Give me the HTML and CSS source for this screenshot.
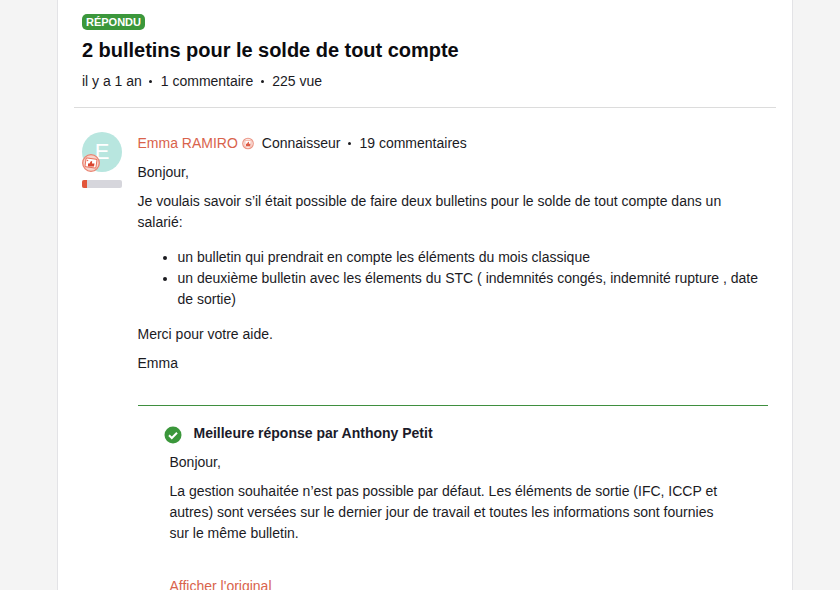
FILE: index.html
```html
<!DOCTYPE html>
<html lang="fr">
<head>
<meta charset="utf-8">
<title>2 bulletins pour le solde de tout compte</title>
<link rel="stylesheet" href="styles.css">
</head>
<body>
<main class="card">
  <header class="head">
    <span class="badge">RÉPONDU</span>
    <h1 class="title">2 bulletins pour le solde de tout compte</h1>
    <div class="meta"><span>il y a 1 an</span><i class="dot"></i><span>1 commentaire</span><i class="dot"></i><span>225 vue</span></div>
  </header>
  <article class="post">
    <aside class="side">
      <div class="avatar">E
        <svg class="rank" viewBox="0 0 18 18"><circle cx="9" cy="9" r="8.300" fill="#f7d3ca" stroke="#ea8471" stroke-width="1.300"/><rect x="3.500" y="4.500" width="11" height="9" rx="1" fill="#fff" stroke="#e8705b" stroke-width="1" transform="rotate(8 9 9)"/><circle cx="5.500" cy="6.500" r=".8" fill="#e8705b"/><path d="M6 12.500V9.500h1.500L9 7l1.200.4-.3 2.100h2.600l-.5 3z" fill="#d9452e"/></svg>
      </div>
      <div class="level"><span class="level-fill"></span></div>
    </aside>
    <div class="body">
      <div class="author"><a class="name">Emma RAMIRO</a>
        <svg class="mini" viewBox="0 0 12 12"><circle cx="6" cy="6" r="5.300" fill="#fbe6e1" stroke="#eb9585" stroke-width="1.100"/><rect x="3" y="3" width="6" height="6" rx=".6" fill="#fff" stroke="#ee9c8c" stroke-width=".6"/><path d="M4 8.500V6.300h1l1.200-2 .8.300-.2 1.700h1.700l-.3 2.200z" fill="#dd5a44"/></svg>
        <span class="role">Connaisseur</span><i class="dot"></i><span>19 commentaires</span></div>
      <p>Bonjour,</p>
      <p>Je voulais savoir s’il était possible de faire deux bulletins pour le solde de tout compte dans un salarié:</p>
      <ul>
        <li>un bulletin qui prendrait en compte les éléments du mois classique</li>
        <li>un deuxième bulletin avec les élements du STC ( indemnités congés, indemnité rupture , date de sortie)</li>
      </ul>
      <p>Merci pour votre aide.</p>
      <p>Emma</p>
      <section class="best">
        <div class="best-head">
          <svg class="check" viewBox="0 0 18 18"><circle cx="9" cy="9" r="8.500" fill="#3b973b"/><path d="M5 9.300l2.800 2.700L13 6.700" fill="none" stroke="#fff" stroke-width="2"/></svg>
          <strong>Meilleure réponse par Anthony Petit</strong>
        </div>
        <div class="best-body">
          <p>Bonjour,</p>
          <p>La gestion souhaitée n’est pas possible par défaut. Les éléments de sortie (IFC, ICCP et autres) sont versées sur le dernier jour de travail et toutes les informations sont fournies sur le même bulletin.</p>
          <a class="orig">Afficher l'original</a>
        </div>
      </section>
    </div>
  </article>
</main>
</body>
</html>
```
FILE: styles.css
```css
html, body { margin: 0; height: 590px; overflow: hidden; }
body { background: #f4f4f4; font-family: "Liberation Sans", Arial, sans-serif; font-size: 14px; line-height: 21px; color: #1b1b1f; }
.card { width: 736px; height: 590px; margin-left: 57px; box-sizing: border-box; background: #fff; border-left: 1px solid #e3e3e6; border-right: 1px solid #e3e3e6; padding: 14px 16px 0 16px; }
.head { height: 93px; border-bottom: 1px solid #dcdcdc; padding-left: 8px; }
.badge { display: block; width: fit-content; height: 16px; padding: 0 4px; background: #3b973b; color: #fff; border-radius: 5px; font-size: 11px; font-weight: 700; line-height: 16px; }
.title { margin: 7px 0 0; font-size: 20px; line-height: 26px; font-weight: 700; color: #0b0b0f; letter-spacing: -0.03px; }
.meta { display: flex; align-items: center; margin-top: 8px; letter-spacing: -0.01px; }
.dot { display: inline-block; width: 3px; height: 3px; border-radius: 50%; background: #1b1b1f; margin: 0 8.500px 0 7.500px; }
.post { display: flex; padding: 25px 8px 0; }
.side { width: 40px; flex: none; }
.avatar { position: relative; width: 40px; height: 40px; margin-top: -1px; border-radius: 50%; background: #b8e6df; color: #fff; font-size: 22px; line-height: 40px; text-align: center; }
.rank { position: absolute; left: 0; top: 22px; width: 18px; height: 18px; }
.level { width: 40px; height: 8px; margin-top: 8px; border-radius: 2px; background: #d6d6dc; overflow: hidden; }
.level-fill { display: block; width: 5px; height: 8px; background: #e2553a; }
.body { margin-left: 15.500px; width: 630.500px; }
.author { display: flex; align-items: center; height: 21px; }
.name { color: #d9634c; }
.mini { width: 12px; height: 13px; margin: 0 8px 0 4px; }
p { margin: 0 0 8px; }
.body > p:first-of-type { margin-top: 8px; }
ul { margin: 14px 0 14px; padding-left: 40px; }
.best { border-top: 1px solid #3f8f3f; margin-top: 31px; padding-top: 17px; }
.best-head { display: flex; align-items: center; height: 21px; padding-left: 26.500px; }
.check { width: 18px; height: 18px; margin-top: 2px; margin-right: 11.500px; }
.best-head strong { color: #1b1b2a; }
.best-body { padding: 8px 46px 0 32px; }
.orig { display: block; margin-top: 32px; color: #d9634c; }
```
